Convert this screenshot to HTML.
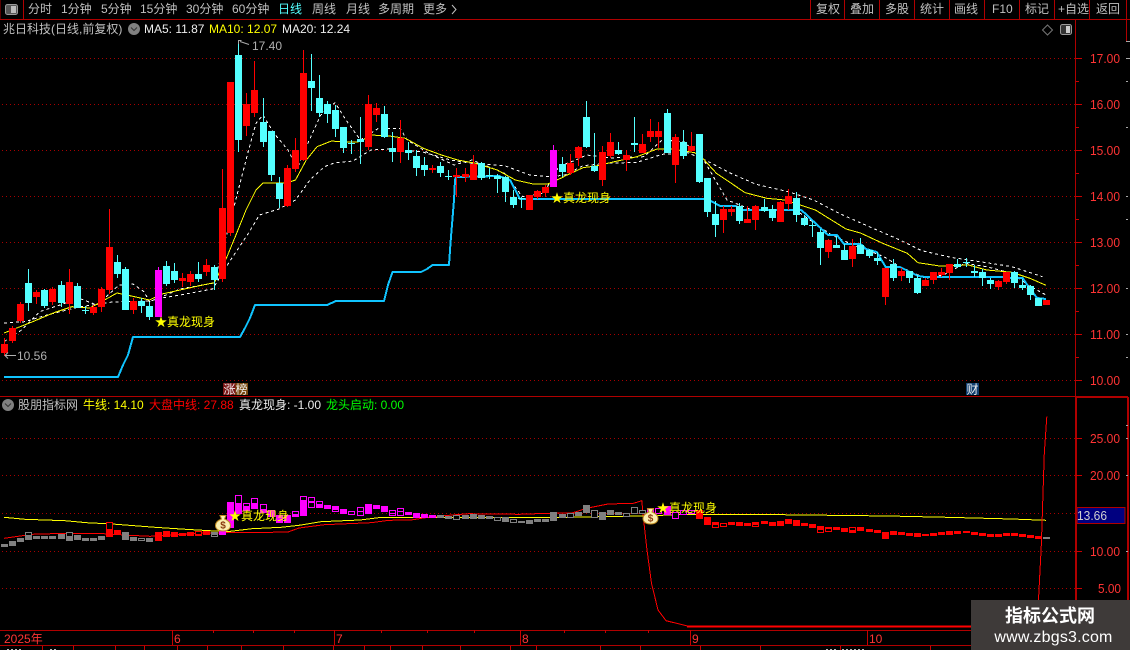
<!DOCTYPE html>
<html lang="zh"><head><meta charset="utf-8"><title>兆日科技</title>
<style>
html,body{margin:0;padding:0;background:#000;width:1130px;height:650px;overflow:hidden}
svg{display:block}
text{font-family:"Liberation Sans","WenQuanYi Zen Hei","Noto Sans CJK SC",sans-serif;font-size:12px}
.m{fill:#c0c0c0}
.a{fill:#ff3434;font-size:13px}
.c{shape-rendering:crispEdges;fill:none}
.l{fill:none;stroke-linejoin:round;shape-rendering:crispEdges}
</style></head><body>
<svg width="1130" height="650" viewBox="0 0 1130 650" xmlns="http://www.w3.org/2000/svg">
<rect width="1130" height="650" fill="#000"/>

<!-- frame -->
<path class="c" stroke="#b00000" d="M0 19.5H1130M23.5 0V19M810.5 0V19M844.5 0V19M879.5 0V19M914.5 0V19M949.5 0V19M984.5 0V19M1019.5 0V19M1054.5 0V19M1089.5 0V19M1126.5 0V19M1126.5 19V42M1075.5 19V396M0 396.5H1075M0 630.5H1076M0 645.5H1130"/>
<path class="c" stroke="#b00000" stroke-width="2" d="M1075 397H1128M1076 397V630M1128 397V650M1076 630V646"/>
<path class="c" stroke="#b00000" d="M0 0V19"/>

<!-- grid -->
<path class="c" stroke="#a80000" stroke-dasharray="1 3" d="M2 58.5H1075M2 104.500H1075M2 150.500H1075M2 196.500H1075M2 242.500H1075M2 288.500H1075M2 334.500H1075M2 380.500H1075M2 438.500H1075M2 475.500H1075M2 513.500H1075M2 551.500H1075M2 588.500H1075"/>
<path class="c" stroke="#c80000" d="M1076 58.5h6M1076 104.5h6M1076 150.5h6M1076 196.5h6M1076 242.5h6M1076 288.5h6M1076 334.5h6M1076 380.5h6M1076 81.5h3M1076 127.5h3M1076 173.5h3M1076 219.5h3M1076 265.5h3M1076 311.5h3M1076 357.5h3M1076 438.5h6M1076 475.5h6M1076 551.5h6M1076 588.5h6"/>
<path class="c" stroke="#c80000" d="M213.5 630v3M253.5 630v3M294.5 630v3M381.5 630v3M427.5 630v3M474.5 630v3M564.5 630v3M605.5 630v3M648.5 630v3M172.5 630v15M334.5 630v15M520.5 630v15M690.5 630v15M867.5 630v15M42.5 646v4M73.5 646v4M115.5 646v4M144.5 646v4M177.5 646v4M207.5 646v4M241.5 646v4M283.5 646v4M333.5 646v4M364.5 646v4M390.5 646v4M422.5 646v4M460.5 646v4M510.5 646v4M536.5 646v4M600.5 646v4M640.5 646v4M700.5 646v4M760.5 646v4M840.5 646v4M930.5 646v4"/>
<path class="c" stroke="#aaa" d="M1126 41.5h4M1126 58.5h4M1126 81.5h2M1126 127.5h2M1126 196.5h2M1126 219.5h2M1126 288.5h2M1126 334.5h2M1126 357.5h2M1126 425.5h2M1126 438.5h2M1126 475.5h2M1126 551.5h2"/>
<path class="c" stroke="#bbb" stroke-dasharray="2 2" d="M7 649.500h15M50 649.500h6M826 649.500h10M842 649.500h24"/>

<!-- top menu -->
<rect x="5.5" y="4.5" width="12" height="10" rx="2" fill="#555" stroke="#999"/><rect x="11" y="6" width="5" height="7" fill="#bbb"/>
<text class="m" x="28" y="13">分时</text>
<text class="m" x="61" y="13">1分钟</text>
<text class="m" x="101" y="13">5分钟</text>
<text class="m" x="140" y="13">15分钟</text>
<text class="m" x="186" y="13">30分钟</text>
<text class="m" x="232" y="13">60分钟</text>
<text x="278" y="13" fill="#54ffff">日线</text>
<text class="m" x="312" y="13">周线</text>
<text class="m" x="346" y="13">月线</text>
<text class="m" x="378" y="13">多周期</text>
<text class="m" x="423" y="13">更多</text>
<path d="M452 5l4 4.500-4 4.500" fill="none" stroke="#c0c0c0"/>
<text class="m" x="816" y="13">复权</text>
<text class="m" x="850" y="13">叠加</text>
<text class="m" x="885" y="13">多股</text>
<text class="m" x="920" y="13">统计</text>
<text class="m" x="954" y="13">画线</text>
<text class="m" x="992" y="13">F10</text>
<text class="m" x="1025" y="13">标记</text>
<text class="m" x="1058" y="13">+自选</text>
<text class="m" x="1096" y="13">返回</text>

<!-- title -->
<text class="m" x="3" y="33">兆日科技(日线,前复权)</text>
<circle cx="134" cy="29" r="6" fill="#808080"/><path d="M131 27.5l3 3 3-3" fill="none" stroke="#333"/>
<text x="144" y="33" fill="#eee">MA5: 11.87</text>
<text x="209" y="33" fill="#ffff00">MA10: 12.07</text>
<text x="282" y="33" fill="#eee">MA20: 12.24</text>
<path d="M1047.5 25l5 5-5 5-5-5z" fill="none" stroke="#777"/>
<rect x="1060.5" y="24.5" width="11" height="10" rx="2" fill="#333" stroke="#999"/><rect x="1066" y="26" width="4" height="7" fill="#ccc"/>

<!-- main MA lines -->
<polyline class="l" stroke="#fff" stroke-dasharray="3 3" points="4,323 25,321.7 47,315 79,307 112,302 150,301 162,298 180,295 212.6,289 230.6,260 248.6,233 259.5,215 279,209 295.5,200 310,180 324.3,166.7 335,162.7 353,161 371,150 389,149 421.6,151.7 450.5,160 472,163.3 504.5,165.7 529.7,175 551.4,176.7 565,175 583,165.7 608,163.3 637,162.3 662.3,154.3 687.5,152.7 703.7,159.3 730.8,173.3 756,184.3 788.4,191.7 813.6,200 839,213.3 867.7,226 900,240 921.8,250.7 950.6,257.3 986.6,262.7 1011.9,266.7 1042.5,276.7"/>
<polyline class="l" stroke="#fff" stroke-dasharray="3 3" points="4,341.7 21.6,330 39.6,311.7 60,305 79,298.3 97,305 119,285 133,284 144,291.7 149.5,301.7 162,296.7 180,289 214,283 234,206.7 248.6,150 256,123.3 263,115 274,133.3 288,150 297.3,168.3 306.3,146.7 320.7,115 335,102.7 346,120 360.4,140 378.4,128.3 400,128.3 407.2,140 428.8,153.3 454,165 472,160 504.5,173.3 522.5,196.7 544,193 558.6,166.7 575.8,160 586.6,155 610,158 644,156.7 662,140 684,141.7 703.7,160 727,200 752.4,210 795.6,210 817,225 831.7,235 853.3,245 884,256.7 900,266.7 925.4,278.3 943.4,275 965,263.3 986.6,266.7 1011.9,273.3 1028,285 1046,295"/>
<polyline class="l" stroke="#ffff00" points="4,333 32,322 54,312.7 72,306.7 90,308 104.5,300 117,293 130,295.7 149.5,300 162,294 180,290 198,286 214.4,282.7 227,256.7 238,230 246,210 256,190 263,183 286.5,183 295.5,180 306.3,160 317,146.7 331.5,141 346,142.3 360,141.7 371,135 389,136 405.4,138.3 423.4,148.3 441.4,155 457.7,160 475.7,163.3 497.3,170 515.3,180 533.3,184 547.7,184 562,177.7 565,176 583,167.7 597.4,165.7 611.8,162.3 637,156.7 657,149 672,149 694.7,152.7 703.7,159.3 716.4,173.3 745.2,192.7 766.8,198.3 784.8,200 815.4,210 846,229 860.5,233 882,243 907.3,253.3 918,262.7 939.8,266 968.6,265 986.6,270 1011.9,272.3 1029.9,278.3 1046,285.3"/>
<polyline class="l" stroke="#10c4ff" stroke-width="2" points="4,377 118,377 123,365 128,355 133,337 240,337 245,328 250,318 255,305 327,305 336,301 384,301 388,285 392.5,272 421,272 427,269 432.5,265 449,265 450.5,243 454,200 455,180 456,177 499,176 510,180 520,199 703.7,199 711,201 720,206 736,206 743.4,210 801,210 804.6,213 822.6,230 828,235 837,235 844,244 860.5,244 866,249 876.7,252 885.7,267 900,267 918,276 925.4,277 1004.6,277 1012,278 1022.7,278 1028,286 1037,298 1046,299"/>

<!-- candle wicks -->
<path class="c" stroke="#ff0000" d="M4.5 338V356M12.5 326V343M20.5 302V323M36.5 290V304M52.5 287V305M69.5 269V314M93.5 305V315M101.5 287V312M109.5 209V294M133.5 298V314M182.5 273V287M190.5 271V286M206.5 259V276M222.5 169V282M230.5 82V236M246.5 93V136M254.5 61V117M287.5 165V207M295.5 138V172M303.5 50V161M368.5 95V150M376.5 103V122M400.5 120V163M432.5 165V173M456.5 168V197M465.5 168V182M473.5 155V180M529.5 195V210M537.5 190V199M545.5 185V197M570.5 154V175M578.5 146V166M602.5 146V186M610.5 133V158M626.5 150V171M642.5 134V153M650.5 119V142M658.5 122V148M675.5 134V183M691.5 132V152M723.5 206V233M731.5 206V216M747.5 206V223M755.5 205V230M780.5 201V222M788.5 189V210M828.5 239V258M852.5 239V267M885.5 268V305M901.5 268V281M925.5 278V286M933.5 272V284M941.5 268V277M949.5 264V280M998.5 280V290M1006.5 272V284"/>
<path class="c" stroke="#54ffff" d="M28.5 269V311M44.5 289V308M61.5 281V307M77.5 283V308M85.5 306V314M117.5 255V278M125.5 267V310M141.5 298V313M149.5 302V320M166.5 261V286M174.5 263V283M198.5 262V282M214.5 265V290M238.5 40V152M263.5 98V147M271.5 131V181M279.5 177V208M311.5 54V111M319.5 75V117M327.5 101V123M335.5 105V137M343.5 127V153M351.5 140V154M360.5 117V164M384.5 106V138M392.5 132V162M408.5 142V160M416.5 150V176M424.5 157V176M440.5 162V177M448.5 170V180M481.5 162V180M489.5 168V179M497.5 174V193M505.5 176V202M513.5 190V208M521.5 197V208M562.5 157V177M586.5 101V148M594.5 133V172M618.5 142V155M634.5 117V152M667.5 109V153M683.5 130V159M699.5 134V183M707.5 178V217M715.5 201V237M739.5 203V224M764.5 199V212M772.5 205V221M796.5 192V222M804.5 215V226M812.5 221V237M820.5 229V265M836.5 236V248M844.5 244V260M860.5 238V254M869.5 249V258M877.5 252V265M893.5 259V281M909.5 271V283M917.5 275V294M957.5 259V268M966.5 258V267M974.5 265V277M982.5 269V286M990.5 278V289M1014.5 271V288M1022.5 279V290M1030.5 285V300M1038.5 298V306"/>
<path class="c" stroke="#ff00ff" d="M158.5 267V317M553.5 145V187"/>
<!-- candle bodies -->
<path class="c" stroke="#ff0000" stroke-width="7" d="M4.5 344V353M12.5 328V341M20.5 304V321M36.5 292V297M52.5 289V302M69.5 282V304M93.5 307V313M101.5 289V307M109.5 247V290M133.5 301V310M182.5 278V281M190.5 274V282M206.5 265V272M222.5 208V279M230.5 82V233M246.5 104V126M254.5 90V113M287.5 168V206M295.5 150V169M303.5 73V160M368.5 104V147M376.5 108V115M400.5 138V152M432.5 168V170M456.5 175V177M465.5 174V177M473.5 164V180M529.5 195V210M537.5 191V197M545.5 187V193M570.5 163V173M578.5 147V158M602.5 152V180M610.5 142V156M626.5 155V160M642.5 144V153M650.5 131V137M658.5 131V137M675.5 137V165M691.5 146V151M723.5 209V220M731.5 209V212M747.5 219V223M755.5 206V220M780.5 202V222M788.5 196V204M828.5 240V252M852.5 246V259M885.5 268V297M901.5 271V276M925.5 280V286M933.5 272V280M941.5 272V275M949.5 264V273M998.5 281V287M1006.5 272V282M1046.5 300V305"/>
<path class="c" stroke="#54ffff" stroke-width="7" d="M28.5 283V303M44.5 290V306M61.5 285V303M77.5 286V308M85.5 310V311M117.5 262V274M125.5 269V310M141.5 301V306M149.5 306V317M166.5 266V284M174.5 271V280M198.5 274V279M214.5 267V280M238.5 55V140M263.5 122V142M271.5 131V175M279.5 183V199M311.5 81V88M319.5 98V113M327.5 104V114M335.5 110V129M343.5 127V148M351.5 143V144M360.5 139V142M384.5 114V137M392.5 148V152M408.5 150V153M416.5 156V168M424.5 165V170M440.5 166V173M448.5 176V177M481.5 163V178M489.5 175V176M497.5 176V179M505.5 177V192M513.5 197V205M521.5 198V199M562.5 164V172M586.5 117V147M594.5 166V171M618.5 150V154M634.5 143V145M667.5 113V153M683.5 142V156M699.5 134V182M707.5 178V212M715.5 214V225M739.5 206V221M764.5 207V211M772.5 209V218M796.5 198V215M804.5 218V225M812.5 225V226M820.5 232V248M836.5 245V248M844.5 250V260M860.5 245V254M869.5 250V256M877.5 258V261M893.5 264V278M909.5 271V278M917.5 278V293M957.5 264V267M966.5 262V263M974.5 271V273M982.5 272V278M990.5 280V284M1014.5 272V283M1022.5 285V288M1030.5 286V295M1038.5 298V306"/>
<path class="c" stroke="#ff00ff" stroke-width="7" d="M158.5 270V317M553.5 150V187"/>

<!-- main annotations -->
<path d="M238.5 44V40.5h3M240 41.5l9 3" fill="none" stroke="#aaa"/>
<text x="252" y="50" fill="#b0b0b0">17.40</text>
<path d="M16 355.5H5M8 352.5l-3 3 3 3" fill="none" stroke="#b0b0b0"/>
<text x="17" y="360" fill="#b0b0b0">10.56</text>
<text x="155" y="326" fill="#ffff00">★真龙现身</text>
<text x="551" y="202" fill="#ffff00">★真龙现身</text>
<rect x="223" y="383" width="12.5" height="12" fill="#7a1414"/><rect x="235.5" y="383" width="12.5" height="12" fill="#7a4a10"/>
<text x="223.5" y="393.5" fill="#eee">涨榜</text>
<rect x="966" y="383" width="13" height="12" fill="#103f70"/>
<text x="966.5" y="393.5" fill="#eee">财</text>

<!-- axis labels -->
<text class="a" x="1090" y="63" textLength="30" lengthAdjust="spacingAndGlyphs">17.00</text>
<text class="a" x="1090" y="109" textLength="30" lengthAdjust="spacingAndGlyphs">16.00</text>
<text class="a" x="1090" y="155" textLength="30" lengthAdjust="spacingAndGlyphs">15.00</text>
<text class="a" x="1090" y="201" textLength="30" lengthAdjust="spacingAndGlyphs">14.00</text>
<text class="a" x="1090" y="247" textLength="30" lengthAdjust="spacingAndGlyphs">13.00</text>
<text class="a" x="1090" y="293" textLength="30" lengthAdjust="spacingAndGlyphs">12.00</text>
<text class="a" x="1090" y="339" textLength="30" lengthAdjust="spacingAndGlyphs">11.00</text>
<text class="a" x="1090" y="385" textLength="30" lengthAdjust="spacingAndGlyphs">10.00</text>
<text class="a" x="1090" y="443" textLength="30" lengthAdjust="spacingAndGlyphs">25.00</text>
<text class="a" x="1090" y="480" textLength="30" lengthAdjust="spacingAndGlyphs">20.00</text>
<text class="a" x="1090" y="556" textLength="30" lengthAdjust="spacingAndGlyphs">10.00</text>
<text class="a" x="1098" y="593" textLength="23" lengthAdjust="spacingAndGlyphs">5.00</text>
<rect x="1077" y="507.5" width="48" height="16" fill="#000080" stroke="#b00000"/>
<text x="1077" y="520" fill="#d0d0d0" style="font-size:13px" textLength="30" lengthAdjust="spacingAndGlyphs">13.66</text>

<!-- lower legend -->
<circle cx="8" cy="405" r="6" fill="#808080"/><path d="M5 403.5l3 3 3-3" fill="none" stroke="#333"/>
<text class="m" x="18" y="409">股朋指标网</text>
<text x="83" y="409" fill="#ffff00">牛线: 14.10</text>
<text x="149" y="409" fill="#ff0000">大盘中线: 27.88</text>
<text x="239" y="409" fill="#eee">真龙现身: -1.00</text>
<text x="326" y="409" fill="#00ff00">龙头启动: 0.00</text>

<!-- lower lines -->
<polyline class="l" stroke="#ffff00" points="4,517.3 25,519.3 65,520.7 86.5,522.7 112,524 155,527.3 185.6,529.3 227,531.7 252,528.7 281,527.3 299,525.3 321,521.7 360,520 378.4,517.7 432.4,517.3 540.5,517.3 565,517.3 644,516 687.5,514.3 781,514.7 889,516 947,517.3 1012,519 1046,520.3"/>
<polyline class="l" stroke="#ff0000" points="4,538.3 18,536.3 32,534.3 65,533.3 97,533.3 130,535.3 150,536.3 169,535.3 198,533.3 223.4,532.7 270,532.3 288,532 299,528 324.3,524.7 371,522.7 389,520.3 411,520 432,516.7 468.5,513.7 519,514.3 548,513.3 572,513 586.6,508.3 608,504 633.5,503.3 641.8,500.7 644,523.3 647,550 651.5,583.3 658,610 666,620.7 687.5,626 1037,626 1039,590 1041.4,543.3 1044.3,453.3 1046.8,416.7"/>
<path class="c" stroke="#ff0000" d="M687 627H1037"/>

<!-- lower bars -->
<path class="c" stroke="#808080" stroke-width="7" d="M4.5 544V547M12.5 541V546M20.5 538V542M28.5 532V540M36.5 536V539M44.5 536V539M52.5 536V539M61.5 534V539M69.5 532V541M77.5 535V540M85.5 538V541M93.5 538V541M101.5 536V540M125.5 532V540M133.5 537V541M141.5 538V541M149.5 538V542M214.5 532V537M440.5 515V518M448.5 516V519M456.5 515V520M465.5 515V519M473.5 514V519M481.5 515V519M489.5 516V519M497.5 517V521M505.5 517V522M513.5 519V523M521.5 521V523M529.5 520V524M537.5 519V522M545.5 519V522M553.5 512V521M562.5 514V518M570.5 513V518M578.5 512V516M586.5 505V513M594.5 510V518M602.5 512V520M610.5 510V515M618.5 512V515M626.5 513V517M634.5 507V514M642.5 510V514M1046.5 537V539"/>
<path class="c" stroke="#ff0000" stroke-width="7" d="M109.5 522V537M117.5 530V535M158.5 532V541M166.5 531V537M174.5 532V537M182.5 533V536M190.5 532V536M198.5 531V536M206.5 531V535M699.5 510V519M707.5 517V525M715.5 522V528M723.5 523V527M731.5 522V525M739.5 522V526M747.5 523V526M755.5 522V527M764.5 521V524M772.5 522V526M780.5 521V526M788.5 519V524M796.5 520V526M804.5 523V526M812.5 524V528M820.5 526V533M828.5 527V532M836.5 527V530M844.5 528V532M852.5 527V533M860.5 527V531M869.5 529V532M877.5 530V533M885.5 532V539M893.5 531V535M901.5 532V535M909.5 533V536M917.5 533V537M925.5 534V536M933.5 533V536M941.5 532V535M949.5 531V535M957.5 531V534M966.5 531V533M974.5 532V535M982.5 533V536M990.5 534V537M998.5 534V537M1006.5 533V536M1014.5 533V536M1022.5 534V537M1030.5 535V538M1038.5 536V539"/>
<path class="c" stroke="#ff00ff" stroke-width="7" d="M222.5 531V535M230.5 502V528M238.5 495V514M246.5 503V511M254.5 498V509M263.5 504V513M271.5 510V517M279.5 515V523M287.5 515V523M295.5 511V517M303.5 496V516M311.5 497V508M319.5 501V508M327.5 505V509M335.5 506V512M343.5 509V514M351.5 511V515M360.5 507V516M368.5 504V514M376.5 505V509M384.5 506V512M392.5 510V516M400.5 508V516M408.5 512V515M416.5 513V518M424.5 514V518M432.5 515V518M650.5 508V513M658.5 508V514M667.5 506V515M675.5 512V519M683.5 510V515M691.5 510V514"/>
<path class="c" stroke="#000" stroke-width="5" d="M28.5 533V535M69.5 533V536M141.5 539V540M214.5 535V536M456.5 516V519M497.5 518V520M513.5 520V522M570.5 514V517M594.5 511V517M626.5 514V516M634.5 508V513M642.5 511V513M109.5 523V529M198.5 532V534M715.5 525V527M723.5 524V526M755.5 525V526M820.5 530V532M828.5 529V531M852.5 528V530M238.5 496V503M246.5 504V506M254.5 499V503M263.5 505V509M295.5 512V514M303.5 497V500M311.5 498V501M311.5 503V507M319.5 502V504M335.5 510V511M351.5 512V514M360.5 508V511M360.5 512V515M392.5 511V513M392.5 514V515M400.5 509V511M400.5 512V515M658.5 509V513M675.5 513V518M683.5 511V514M691.5 511V513"/>

<!-- money bags -->
<g transform="translate(223 524)">
<path d="M-3-8.5h6l-1.5 3.5c4 1.500 6 4 6 6.500 0 3.500-3 5.500-7.500 5.500s-7.500-2-7.500-5.500c0-2.500 2-5 6-6.500z" fill="#fbeeb0" stroke="#c08a20"/>
<text x="0" y="4.500" text-anchor="middle" style="font-size:10px;font-weight:bold" fill="#8a3a10">$</text>
</g>
<g transform="translate(650.500 517)">
<path d="M-3-8.500h6l-1.500 3.500c4 1.500 6 4 6 6.500 0 3.500-3 5.500-7.500 5.500s-7.500-2-7.500-5.500c0-2.500 2-5 6-6.500z" fill="#fbeeb0" stroke="#c08a20"/>
<text x="0" y="4.500" text-anchor="middle" style="font-size:10px;font-weight:bold" fill="#8a3a10">$</text>
</g>

<!-- lower labels -->
<text x="229" y="520" fill="#ffff00">★真龙现身</text>
<text x="657" y="512" fill="#ffff00">★真龙现身</text>

<!-- time axis -->
<text x="4" y="643" fill="#ff3434">2025年</text>
<text x="174" y="643" fill="#ff3434">6</text>
<text x="336" y="643" fill="#ff3434">7</text>
<text x="522" y="643" fill="#ff3434">8</text>
<text x="692" y="643" fill="#ff3434">9</text>
<text x="869" y="643" fill="#ff3434">10</text>

<!-- watermark -->
<rect x="971" y="600" width="159" height="50" fill="#3e3a39"/>
<text x="1050" y="622" text-anchor="middle" fill="#fff" style="font-size:18px;font-weight:bold">指标公式网</text>
<text x="1053.500" y="642" text-anchor="middle" fill="#fff" style="font-size:16px;letter-spacing:.2px">www.zbgs3.com</text>
</svg>
</body></html>
